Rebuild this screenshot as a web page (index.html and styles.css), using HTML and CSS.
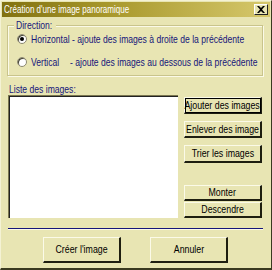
FILE: index.html
```html
<!DOCTYPE html>
<html lang="fr">
<head>
<meta charset="utf-8">
<link rel="stylesheet" href="styles.css">
<title>Création d'une image panoramique</title>
</head>
<body>
<div class="window">
  <div class="titlebar">
    <span class="title sx">Création d'une image panoramique</span>
    <span class="close"><svg width="8" height="7" viewBox="0 0 8 7"><path d="M0 0h2l2 2 2-2h2L5 3.5 8 7H6L4 5 2 7H0l3-3.5z" fill="#000"/></svg></span>
  </div>
  <div class="body">
    <div class="group">
      <span class="legend"><span class="sx">Direction:</span></span>
      <div class="radio-row">
        <span class="radio checked"></span>
        <span class="rlabel sx">Horizontal - ajoute des images à droite de la précédente</span>
      </div>
      <div class="radio-row">
        <span class="radio"></span>
        <span class="rlabel sx"><span class="rname">Vertical</span>- ajoute des images au dessous de la précédente</span>
      </div>
    </div>
    <div class="list-label"><span class="sx">Liste des images:</span></div>
    <div class="list-row">
      <div class="listbox"></div>
      <div class="side">
        <button class="btn default"><span class="bx">Ajouter des images</span></button>
        <button class="btn"><span class="bx">Enlever des image</span></button>
        <button class="btn trier"><span class="bx">Trier les images</span></button>
        <div class="spacer"></div>
        <button class="btn small"><span class="bx">Monter</span></button>
        <button class="btn small"><span class="bx">Descendre</span></button>
      </div>
    </div>
    <div class="separator"></div>
    <div class="footer">
      <button class="btn big"><span class="bx">Créer l'image</span></button>
      <button class="btn big"><span class="bx">Annuler</span></button>
    </div>
  </div>
</div>
</body>
</html>
```
FILE: styles.css
```css
* { box-sizing: border-box; }
html, body { margin: 0; padding: 0; }
body {
  width: 272px;
  height: 270px;
  overflow: hidden;
  font-family: "Liberation Sans", Arial, sans-serif;
  font-size: 11px;
  background: #e8e5b3;
}
.sx {
  display: inline-block;
  white-space: nowrap;
  transform: scaleX(0.78);
  transform-origin: left center;
}
.bx {
  display: inline-block;
  flex: none;
  white-space: nowrap;
  transform: scaleX(0.8);
  transform-origin: center center;
}
.window {
  width: 272px;
  height: 270px;
  background: #e8e5b3;
  border-left: 1px solid #f4f2d4;
  border-top: 1px solid #f4f2d4;
  border-right: 1px solid #3a3a20;
  border-bottom: 2px solid #3a3a20;
  display: flex;
  flex-direction: column;
  overflow: hidden;
}
.titlebar {
  height: 15px;
  margin: 1px 1px 0 1px;
  background: linear-gradient(to right, #817110 0%, #a8982c 40%, #d6c86c 100%);
  display: flex;
  align-items: center;
  justify-content: space-between;
  padding: 0 2px 0 2px;
}
.title.sx {
  color: #fff;
  font-size: 11px;
  line-height: 13px;
  transform: scaleX(0.73);
}
.close {
  width: 14px;
  height: 11px;
  background: #e8e5b3;
  border-top: 1px solid #fff;
  border-left: 1px solid #fff;
  border-right: 1px solid #222;
  border-bottom: 1px solid #222;
  display: flex;
  align-items: center;
  justify-content: center;
}
.close svg { display: block; }
.body {
  flex: 1;
  padding: 8px 7px 0 6px;
  display: flex;
  flex-direction: column;
}
.group {
  position: relative;
  height: 51px;
  border: 1px solid #c9c48c;
  box-shadow: inset 1px 1px 0 #fbfae8, 1px 1px 0 #fbfae8;
  padding: 7px 0 0 9px;
  margin-right: 1px;
}
.legend {
  position: absolute;
  top: -7px;
  left: 6px;
  padding: 0 2px;
  width: 42px;
  background: #e8e5b3;
  color: #15157a;
  line-height: 12px;
}
.radio-row {
  display: flex;
  align-items: center;
  height: 12px;
  margin-bottom: 11px;
}
.radio {
  width: 10px;
  height: 10px;
  border-radius: 50%;
  background: #fff;
  border: 1px solid #8c8870;
  box-shadow: inset 1px 1px 0 #404030;
  margin-right: 4px;
  position: relative;
  flex: none;
}
.radio.checked::after {
  content: "";
  position: absolute;
  left: 2px;
  top: 2px;
  width: 4px;
  height: 4px;
  border-radius: 50%;
  background: #000;
}
.rlabel { color: #15157a; }
.rname { display: inline-block; width: 50px; }
.list-label {
  color: #15157a;
  margin-top: 8px;
  margin-left: 2px;
  line-height: 11px;
  height: 11px;
}
.list-row {
  display: flex;
}
.listbox {
  width: 170px;
  height: 123px;
  margin-left: 1px;
  background: #fff;
  border-top: 1px solid #7a7650;
  border-left: 1px solid #7a7650;
  box-shadow: inset 1px 1px 0 #222;
}
.side {
  margin-left: 6px;
  display: flex;
  flex-direction: column;
  width: 78px;
}
.btn {
  font-family: inherit;
  font-size: 11px;
  color: #000;
  background: #e8e5b3;
  border-top: 1px solid #fbfae8;
  border-left: 1px solid #fbfae8;
  border-right: 2px solid #1e1e10;
  border-bottom: 2px solid #1e1e10;
  padding: 0;
  margin: 0;
  height: 17px;
  width: 78px;
  line-height: 13px;
  display: flex;
  align-items: center;
  justify-content: center;
  overflow: visible;
}
.btn.default {
  outline: 1px solid #000;
  outline-offset: -2px;
  margin-top: 2px;
}
.side .btn + .btn { margin-top: 7px; }
.side .trier { height: 18px; }
.spacer { flex: 1; }
.side .btn.small { height: 16px; }
.side .btn.small + .btn.small { margin-top: 1px; }
.separator {
  height: 1px;
  flex: none;
  background: #15157a;
  margin-top: 10px;
  margin-left: 1px;
  margin-right: 1px;
  box-shadow: 0 1px 0 #fbfae8;
}
.footer {
  display: flex;
  margin-top: 8px;
  padding-left: 36px;
  gap: 29px;
}
.btn.big { height: 26px; width: 78px; }
```
